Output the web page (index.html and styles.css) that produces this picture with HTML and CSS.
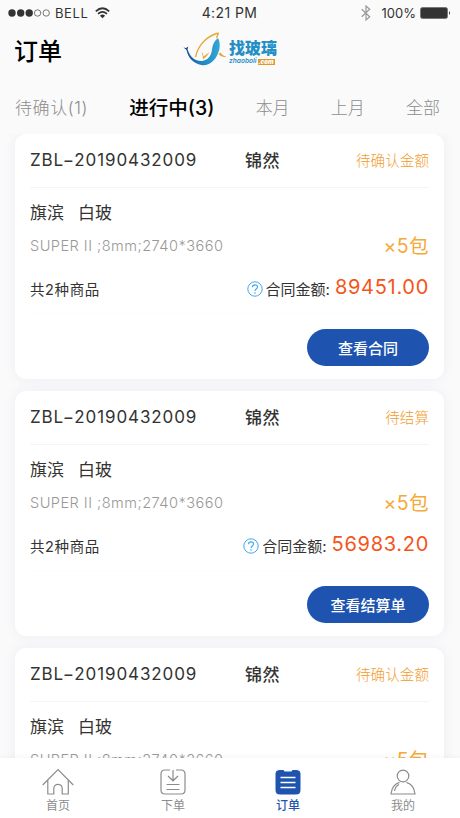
FILE: index.html
```
<!DOCTYPE html>
<html lang="zh-CN">
<head>
    <meta charset="UTF-8">
    <meta name="viewport" content="width=device-width, initial-scale=1.0">
    <title>订单</title>
    <link rel="stylesheet" href="styles.css">
</head>
<body>
    <div class="page">
        <div class="status-bar">
            <div class="status-left">
                <svg width="42" height="10" viewBox="0 0 42 10">
                    <g fill="#333"><circle cx="4" cy="5" r="3.7"/><circle cx="12.7" cy="5" r="3.7"/><circle cx="21.2" cy="5" r="3.7"/></g>
                    <g fill="none" stroke="#555" stroke-width=".8"><circle cx="29.6" cy="5" r="3.2"/><circle cx="38.2" cy="5" r="3.2"/></g>
                </svg>
                <span class="carrier">BELL</span>
                <svg class="wifi" width="15" height="12" viewBox="0 0 15 12" fill="none" stroke="#333" stroke-width="1.7">
                    <path d="M.8 4.3Q7.5-1.8 14.2 4.3M3 6.8Q7.5 2.8 12 6.8"/>
                    <path d="M4.9 8.7Q7.5 6.4 10.1 8.7L7.5 11.3z" fill="#333" stroke="none"/>
                </svg>
            </div>
            <span class="time">4:21 PM</span>
            <div class="status-right">
                <svg width="10" height="16" viewBox="0 0 10 16" fill="none" stroke="#999" stroke-width="1.2">
                    <path d="M.7 4.3l8 7.4L5 15V1l3.7 3.3-8 7.4"/>
                </svg>
                <span class="percent">100%</span>
                <svg class="battery" width="31" height="12" viewBox="0 0 31 12">
                    <rect x=".5" y=".5" width="27" height="11" rx="2" fill="#333" stroke="#777"/>
                    <path d="M29 4q2 2 0 4z" fill="#333"/>
                </svg>
            </div>
        </div>

        <header class="header">
            <h1>订单</h1>
            <div class="logo">
                <svg width="45" height="36" viewBox="0 0 45 36">
                    <defs>
                        <linearGradient id="whale" x1="0" y1="0" x2="1" y2="0">
                            <stop offset="0" stop-color="#17458f"/>
                            <stop offset=".5" stop-color="#1c86c4"/>
                            <stop offset="1" stop-color="#35a6d4"/>
                        </linearGradient>
                    </defs>
                    <path d="M.5 15.500l2.500.5 2.300-1.500-.7 3C7.500 26 13 29.500 19 29c6-.8 9-5 10-11 .3-5.500 2.500-9 6-12 3 5.500 2 12.500-1.500 18.500C30 30.500 25 34 18.500 33 10 31.600 5 25.500 3.500 18z" fill="url(#whale)"/>
                    <path d="M35.500 1C25 3.500 15.500 12 12.500 25M35.500 1L33.500 6" fill="none" stroke="#e5a832" stroke-width="1.300"/>
                    <path d="M18.500 19.500q2 2.500 2 5 2.500-1.500 6-4.500-2 4.500-6.500 7.500 0-4-1.500-8zM35.500 22q3.500 4.500 8 2.500-3 0-6-4z" fill="#e5a832"/>
                </svg>
                <div class="logo-text">
                    <div class="logo-name">找玻璃</div>
                    <div class="logo-domain"><span>zhaoboli</span><b>.com</b></div>
                </div>
            </div>
        </header>

        <nav class="tabs">
            <a class="pending">待确认(1)</a>
            <a class="current">进行中(3)</a>
            <a>本月</a>
            <a>上月</a>
            <a>全部</a>
        </nav>

        <main class="orders">
            <section class="card">
                <div class="card-head">
                    <span class="order-no">ZBL−20190432009</span>
                    <span class="customer">锦然</span>
                    <span class="state">待确认金额</span>
                </div>
                <div class="product"><span>旗滨</span><span>白玻</span></div>
                <div class="spec-row">
                    <span class="spec">SUPER II ;8mm;2740*3660</span>
                    <span class="quantity">×5包</span>
                </div>
                <div class="total-row">
                    <span class="count">共2种商品</span>
                    <svg class="help" width="16" height="16" viewBox="0 0 16 16" fill="none" stroke="#43a9ee">
                        <circle cx="8" cy="8" r="7.200"/>
                        <path d="M5.500 6.300C5.500 3 10.500 3 10.500 6c0 2-2.500 2-2.500 4M8 11.300v1.400" stroke-width="1.200"/>
                    </svg>
                    <span class="amount-label">合同金额:</span>
                    <span class="amount">89451.00</span>
                </div>
                <div class="card-foot"><button class="btn">查看合同</button></div>
            </section>

            <section class="card">
                <div class="card-head">
                    <span class="order-no">ZBL−20190432009</span>
                    <span class="customer">锦然</span>
                    <span class="state">待结算</span>
                </div>
                <div class="product"><span>旗滨</span><span>白玻</span></div>
                <div class="spec-row">
                    <span class="spec">SUPER II ;8mm;2740*3660</span>
                    <span class="quantity">×5包</span>
                </div>
                <div class="total-row">
                    <span class="count">共2种商品</span>
                    <svg class="help" width="16" height="16" viewBox="0 0 16 16" fill="none" stroke="#43a9ee">
                        <circle cx="8" cy="8" r="7.200"/>
                        <path d="M5.500 6.300C5.500 3 10.500 3 10.500 6c0 2-2.500 2-2.500 4M8 11.300v1.400" stroke-width="1.200"/>
                    </svg>
                    <span class="amount-label">合同金额:</span>
                    <span class="amount">56983.20</span>
                </div>
                <div class="card-foot"><button class="btn">查看结算单</button></div>
            </section>

            <section class="card">
                <div class="card-head">
                    <span class="order-no">ZBL−20190432009</span>
                    <span class="customer">锦然</span>
                    <span class="state">待确认金额</span>
                </div>
                <div class="product"><span>旗滨</span><span>白玻</span></div>
                <div class="spec-row">
                    <span class="spec">SUPER II ;8mm;2740*3660</span>
                    <span class="quantity">×5包</span>
                </div>
            </section>
        </main>

        <nav class="tabbar">
            <a>
                <svg width="32" height="28" viewBox="0 0 32 28" fill="none" stroke="#8c8c8c" stroke-width="1.200">
                    <path d="M.7 17L16 1.700 31.300 17M5.800 12.300V26H11.800V20.500a4.200 4.200 0 0 1 8.400 0V26H26.300V12.300"/>
                </svg>
                <span>首页</span>
            </a>
            <a>
                <svg width="26" height="28" viewBox="0 0 26 28" fill="none" stroke="#8c8c8c" stroke-width="1.200">
                    <path d="M10 2H5Q1 2 1 6V22Q1 26 5 26H21Q25 26 25 22V6Q25 2 21 2H16M13 2V12.500M8 8l5 4.800L18 8M6.500 16.500H19.500M6.500 21.500H19.500"/>
                </svg>
                <span>下单</span>
            </a>
            <a class="current">
                <svg width="26" height="28" viewBox="0 0 26 28">
                    <path d="M5 2H8.500Q9 3.500 10.500 3.500H15.500Q17 3.500 17.500 2H21Q25.500 2 25.500 6V22Q25.500 26.500 21 26.500H5Q.5 26.500 .5 22V6Q.5 2 5 2z" fill="#1e54b0"/>
                    <path d="M5.500 9.500H20.500M5.500 14.500H20.500M5.500 19.500H20.500" stroke="#fff" stroke-width="1.300"/>
                </svg>
                <span>订单</span>
            </a>
            <a>
                <svg width="26" height="28" viewBox="0 0 26 28" fill="none" stroke="#8c8c8c" stroke-width="1.200">
                    <circle cx="13" cy="8" r="5.800"/>
                    <path d="M9.500 14.300Q2 16.500 1 26H25Q24 16.500 16.500 14.300M4.500 23Q5.500 18 9 16.500"/>
                </svg>
                <span>我的</span>
            </a>
        </nav>
    </div>
</body>
</html>
```
FILE: styles.css
```
* {
    box-sizing: border-box;
    margin: 0;
    padding: 0;
}

body {
    font-family: Inter, "Noto Sans CJK SC", sans-serif;
    background-color: #fafafa;
    color: #333;
}

svg {
    display: block;
    flex: none;
}

.page {
    display: flex;
    flex-direction: column;
    width: 460px;
    height: 818px;
    overflow: hidden;
}

.status-bar {
    display: grid;
    grid-template-columns: 1fr auto 1fr;
    align-items: center;
    height: 26px;
    padding: 0 9px 0 8px;
    font-size: 13px;
    line-height: 26px;
}

.status-left,
.status-right {
    display: flex;
    align-items: center;
}

.status-right {
    justify-content: flex-end;
}

.carrier {
    margin: 0 7px 0 5px;
    letter-spacing: 0.6px;
}

.time {
    font-size: 14px;
    letter-spacing: 0.4px;
}

.percent {
    margin: 0 4px 0 11px;
}

.header {
    display: flex;
    height: 54px;
    padding-left: 14px;
}

h1 {
    width: 169px;
    padding-top: 8px;
    font-size: 24px;
    font-weight: 500;
    line-height: 36px;
    color: #000;
}

.logo {
    display: flex;
    padding-top: 6px;
}

.logo-text {
    padding: 8px 0 0 1px;
}

.logo-name {
    font-size: 16px;
    font-weight: 900;
    line-height: 17px;
    color: #238fc6;
}

.logo-domain {
    display: flex;
    align-items: center;
    margin-top: 1px;
    font-size: 6.6px;
    font-style: italic;
    font-weight: 600;
    line-height: 7px;
    color: #238fc6;
}

.logo-domain b {
    width: 17px;
    height: 6px;
    margin-left: 1px;
    font-size: 6px;
    line-height: 5px;
    text-align: center;
    color: #fff;
    background-color: #e09a2b;
}

.tabs {
    display: flex;
    align-items: center;
    justify-content: space-between;
    height: 54px;
    padding: 0 20px 2px 15px;
    font-size: 17px;
    font-weight: 300;
    color: #8c8c8c;
}

.tabs .pending {
    letter-spacing: 0.6px;
}

.tabs .current {
    font-size: 19.5px;
    font-weight: 500;
    color: #000;
}

.orders {
    display: flex;
    flex: 1;
    flex-direction: column;
    gap: 12px;
    min-height: 0;
    padding: 0 16px 0 15px;
    overflow: hidden;
    overflow: clip;
}

.card {
    flex: none;
    height: 245px;
    padding: 0 15px;
    background-color: #fff;
    border-radius: 11px;
    box-shadow: 0 0 12px rgba(70, 90, 160, 0.08);
}

.card-head {
    display: grid;
    grid-template-columns: 215px 1fr auto;
    align-items: center;
    height: 54px;
    padding-bottom: 2px;
    border-bottom: 1px solid #f5f5f5;
}

.order-no {
    font-size: 17px;
    letter-spacing: 0.9px;
}

.customer {
    font-size: 17px;
    font-weight: 500;
    letter-spacing: 0.4px;
}

.state {
    font-size: 14.6px;
    font-weight: 300;
    color: #f39b2c;
}

.product {
    display: flex;
    align-items: center;
    gap: 14px;
    height: 49px;
    padding-bottom: 2px;
    font-size: 17px;
}

.spec-row {
    display: flex;
    align-items: center;
    justify-content: space-between;
    height: 19px;
    padding-bottom: 2px;
}

.spec {
    font-size: 14.6px;
    font-weight: 300;
    letter-spacing: 0.45px;
    color: #999;
}

.quantity {
    margin-top: -3px;
    font-size: 19.5px;
    letter-spacing: 0.4px;
    color: #f5a936;
}

.total-row {
    display: flex;
    align-items: center;
    height: 58px;
    padding-top: 8px;
    border-bottom: 1px solid #fcfcfc;
}

.count {
    margin-right: auto;
    font-size: 14.5px;
    letter-spacing: 0.6px;
}

.help {
    margin-right: 3px;
}

.amount-label {
    font-size: 15px;
}

.amount {
    margin-left: 5px;
    padding-bottom: 3px;
    font-size: 20px;
    letter-spacing: 0.7px;
    color: #f4551b;
}

.card-foot {
    display: flex;
    justify-content: flex-end;
    padding-top: 15px;
}

.btn {
    width: 122px;
    height: 37px;
    padding-bottom: 1px;
    border: none;
    border-radius: 19px;
    font-family: inherit;
    font-size: 15px;
    font-weight: 500;
    color: #fff;
    background-color: #1e54b0;
}

.tabbar {
    position: relative;
    display: flex;
    flex: none;
    height: 60px;
    background-color: #fff;
    box-shadow: 0 -1px 5px rgba(60, 80, 130, 0.06);
}

.tabbar a {
    display: flex;
    flex: 1;
    flex-direction: column;
    align-items: center;
    padding: 10px 0 0 1px;
    font-size: 12px;
    line-height: 20px;
    color: #8c8c8c;
}

.tabbar .current {
    font-weight: 500;
    color: #1e54b0;
}
```
